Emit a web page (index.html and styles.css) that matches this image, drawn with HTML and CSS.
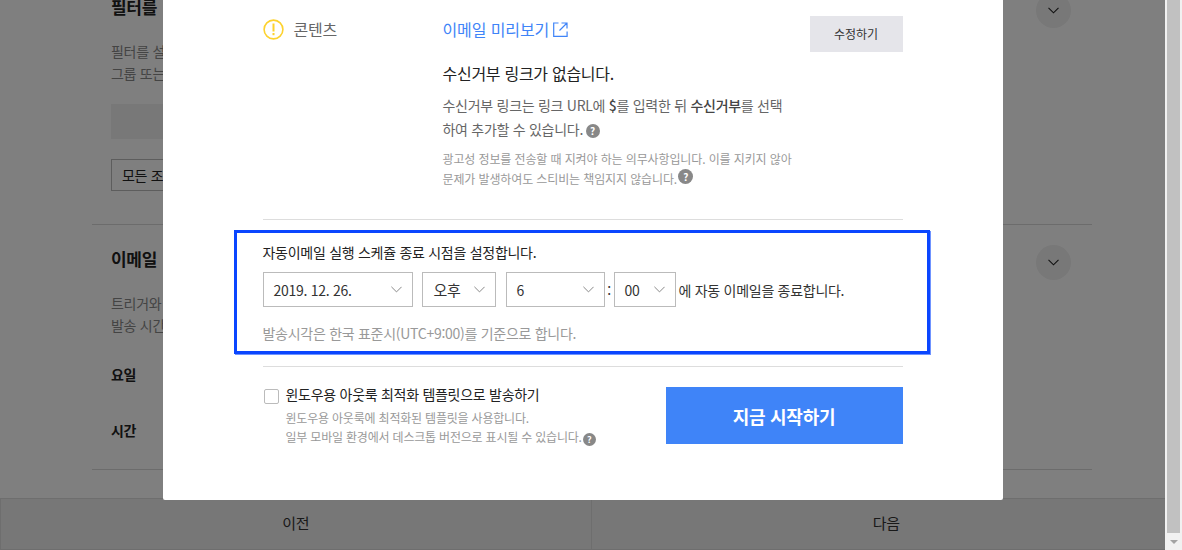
FILE: index.html
```html
<!DOCTYPE html>
<html lang="ko">
<head>
<meta charset="utf-8">
<title>자동이메일</title>
<link rel="stylesheet" href="styles.css">
</head>
<body>
<div class="window">
  <div class="viewport">
    <main class="page">
      <section class="sec sec-filter">
        <div class="sec-head">
          <h2 class="sec-title">필터를</h2>
          <span class="round-btn"><svg width="11" height="7" viewBox="0 0 11 7"><path d="M.5.8l5 5 5-5" fill="none" stroke="#222" stroke-width="1.100"/></svg></span>
        </div>
        <p class="sec-desc">필터를 설정<br>그룹 또는 선택</p>
        <div class="filter-bar"></div>
        <div class="filter-select">모든 조건</div>
      </section>
      <section class="sec sec-mail">
        <div class="sec-head">
          <h2 class="sec-title">이메일</h2>
          <span class="round-btn"><svg width="11" height="7" viewBox="0 0 11 7"><path d="M.5.8l5 5 5-5" fill="none" stroke="#222" stroke-width="1.100"/></svg></span>
        </div>
        <p class="sec-desc">트리거와 발송<br>발송 시간 설정</p>
        <div class="field">요일</div>
        <div class="field field-time">시간</div>
      </section>
    </main>
    <footer class="footer">
      <button class="foot-btn" type="button">이전</button>
      <button class="foot-btn" type="button">다음</button>
    </footer>
    <div class="overlay">
      <div class="modal">
        <div class="check-row">
          <svg class="warn" width="21" height="21" viewBox="0 0 21 21"><circle cx="10.500" cy="10.500" r="9.400" fill="none" stroke="#fdd22e" stroke-width="1.600"/><rect x="9.500" y="4.500" width="2" height="8" fill="#fdd22e"/><rect x="9.500" y="14" width="2" height="2.200" fill="#fdd22e"/></svg>
          <div class="check-label">콘텐츠</div>
          <div class="check-body">
            <a class="preview-link">이메일 미리보기<svg class="ext" width="15" height="15" viewBox="0 0 15 15"><path d="M5.500 1H.7v13.300h13.400V9.500M6.500 8.500L13.500 1.500M8.500 1H14v5.500" fill="none" stroke="#3f84f8" stroke-width="1.200"/></svg></a>
            <h3 class="warn-title">수신거부 링크가 없습니다.</h3>
            <p class="warn-text">수신거부 링크는 링크 URL에 <b>$</b>를 입력한 뒤 <b>수신거부</b>를 선택<br>하여 추가할 수 있습니다. <span class="help">?</span></p>
            <p class="warn-note">광고성 정보를 전송할 때 지켜야 하는 의무사항입니다. 이를 지키지 않아<br>문제가 발생하여도 스티비는 책임지지 않습니다. <span class="help help-up">?</span></p>
          </div>
          <button class="edit-btn" type="button">수정하기</button>
        </div>
        <div class="schedule">
          <p class="sched-title">자동이메일 실행 스케쥴 종료 시점을 설정합니다.</p>
          <div class="sched-row">
            <div class="select s-date">2019. 12. 26.<svg width="11" height="7" viewBox="0 0 11 7"><path d="M.4.8l5.100 5.100L10.600.8" fill="none" stroke="#888" stroke-width="1"/></svg></div>
            <div class="select s-ampm">오후<svg width="11" height="7" viewBox="0 0 11 7"><path d="M.4.8l5.100 5.100L10.600.8" fill="none" stroke="#888" stroke-width="1"/></svg></div>
            <div class="select s-hour">6<svg width="11" height="7" viewBox="0 0 11 7"><path d="M.4.8l5.100 5.100L10.600.8" fill="none" stroke="#888" stroke-width="1"/></svg></div>
            <span class="colon">:</span>
            <div class="select s-min">00<svg width="11" height="7" viewBox="0 0 11 7"><path d="M.4.8l5.100 5.100L10.600.8" fill="none" stroke="#888" stroke-width="1"/></svg></div>
            <span class="sched-tail">에 자동 이메일을 종료합니다.</span>
          </div>
          <p class="sched-note">발송시각은 한국 표준시(UTC+9:00)를 기준으로 합니다.</p>
        </div>
        <div class="send-row">
          <div class="outlook">
            <span class="checkbox"></span>
            <div>
              <div class="outlook-title">윈도우용 아웃룩 최적화 템플릿으로 발송하기</div>
              <p class="outlook-note">윈도우용 아웃룩에 최적화된 템플릿을 사용합니다.<br>일부 모바일 환경에서 데스크톱 버전으로 표시될 수 있습니다. <span class="help help-sm">?</span></p>
            </div>
          </div>
          <button class="start-btn" type="button">지금 시작하기</button>
        </div>
      </div>
    </div>
  </div>
  <div class="scrollbar">
    <div class="thumb"></div>
    <div class="arrow"></div>
  </div>
</div>
</body>
</html>
```
FILE: styles.css
```css
* { box-sizing: border-box; }
html, body { margin: 0; height: 100%; overflow: hidden; }
body { font-family: "Noto Sans CJK KR", "Noto Sans", sans-serif; color: #333; background: #fff; font-size: 14px; letter-spacing: -.02em; }
p, h2, h3 { margin: 0; font-weight: 400; }
button { font-family: inherit; letter-spacing: inherit; border: 0; padding: 0; }

.window { display: flex; height: 550px; }
.viewport { position: relative; flex: 1; overflow: hidden; }

.page { width: 1000px; margin: -8px 0 0 92px; }
.sec { padding-left: 19px; border-bottom: 1px solid #d8d8d8; }
.sec-filter { height: 233px; }
.sec-mail { height: 245px; padding-top: 19px; }
.sec-head { display: flex; justify-content: space-between; align-items: center; height: 36px; padding-right: 21px; }
.sec-title { font-size: 17px; font-weight: 700; color: #222; padding-bottom: 8px; }
.round-btn { width: 35px; height: 35px; border-radius: 50%; background: #f0f0f0; display: flex; align-items: center; justify-content: center; }
.sec-desc { margin-top: 12px; line-height: 22px; color: #888; font-size: 14px; }
.filter-bar { margin-top: 20px; height: 35px; background: #f0f0f0; width: 300px; }
.filter-select { margin-top: 20px; width: 200px; height: 32px; border: 1px solid #bbb; line-height: 30px; padding-left: 10px; font-size: 14px; color: #222; }
.field { margin-top: 28px; font-size: 14px; line-height: 20px; font-weight: 700; color: #222; }
.field-time { margin-top: 36px; }

.footer { position: absolute; left: 0; bottom: 0; width: 1182px; height: 52px; display: flex; }
.foot-btn { flex: 1; background: #eee; border: 1px solid #dcdcdc; font-size: 15px; color: #333; padding-bottom: 4px; }
.foot-btn + .foot-btn { border-left: 0; }

.overlay { position: absolute; inset: 0; background: rgba(0, 0, 0, .5); display: flex; justify-content: center; align-items: flex-start; }
.modal { width: 840px; height: 500px; background: #fff; padding: 16px 100px 0; border-radius: 0 0 2px 2px; }

.check-row { display: flex; align-items: flex-start; height: 204px; border-bottom: 1px solid #ddd; }
.warn { margin-top: 3px; flex: none; }
.check-label { width: 159px; padding-left: 10px; font-size: 16px; line-height: 26px; color: #666; flex: none; }
.check-body { width: 367px; flex: none; }
.preview-link { display: flex; align-items: center; gap: 4px; font-size: 16px; line-height: 26px; color: #3f84f8; letter-spacing: -.1px; }
.warn-title { margin-top: 19px; font-size: 16px; line-height: 24px; color: #222; }
.warn-text { margin-top: 8px; font-size: 14px; line-height: 24px; color: #666; }
.warn-text b { font-weight: 500; color: #444; }
.warn-note { margin-top: 8px; font-size: 12px; line-height: 20px; color: #999; letter-spacing: -.12px; }
.help { display: inline-block; width: 14px; height: 14px; margin-left: -1px; border-radius: 50%; background: #888; color: #fff; font-size: 10px; font-weight: 700; line-height: 14px; text-align: center; vertical-align: 0; letter-spacing: 0; }
.help-up { width: 15px; height: 15px; margin-left: -2px; line-height: 15px; vertical-align: 3px; }
.help-sm { width: 13px; height: 13px; margin-left: -2px; line-height: 13px; font-size: 9px; vertical-align: -1px; }
.edit-btn { width: 93px; height: 36px; margin-left: auto; background: #e5e5ea; font-size: 12px; color: #333; padding-bottom: 2px; letter-spacing: 0; }

.schedule { margin: 10px -27px 12px -29px; height: 124px; border: 3px solid #0a46ff; box-shadow: 1px 1px 0 #6f93ff; padding: 8px 0 0 26px; }
.sched-title { font-size: 14px; line-height: 22px; color: #222; }
.sched-row { display: flex; align-items: center; margin-top: 9px; font-size: 14px; color: #333; }
.select { height: 35px; border: 1px solid #bbb; display: flex; align-items: center; justify-content: space-between; padding: 0 10px; flex: none; }
.s-date { width: 150px; }
.s-ampm { width: 74px; margin-left: 9px; padding-left: 11px; font-size: 15px; }
.s-hour { width: 99px; margin-left: 10px; }
.colon { width: 9px; text-align: center; }
.s-min { width: 62px; }
.sched-tail { margin-left: 3px; color: #333; }
.sched-note { margin-top: 15px; font-size: 14px; line-height: 22px; color: #999; }

.send-row { display: flex; justify-content: space-between; align-items: flex-start; border-top: 1px solid #ddd; padding-top: 20px; }
.outlook { display: flex; gap: 7px; padding-left: 1px; }
.checkbox { width: 15px; height: 15px; margin-top: 2px; border: 1px solid #bbb; border-radius: 2px; flex: none; }
.outlook-title { font-size: 14px; line-height: 18px; color: #222; margin-top: -2px; }
.outlook-note { margin-top: 5px; font-size: 12px; line-height: 19px; color: #999; letter-spacing: -.2px; }
.start-btn { width: 237px; height: 57px; background: #3f84f8; color: #fff; font-size: 18px; font-weight: 700; }

.scrollbar { width: 17px; position: relative; background: #f1f1f1; padding: 0 2px; flex: none; }
.thumb { height: 533px; background: #c1c1c1; }
.arrow { position: absolute; left: 5px; bottom: 6px; width: 0; border: 4px solid transparent; border-top-color: #a3a3a3; border-bottom: 0; }
```
